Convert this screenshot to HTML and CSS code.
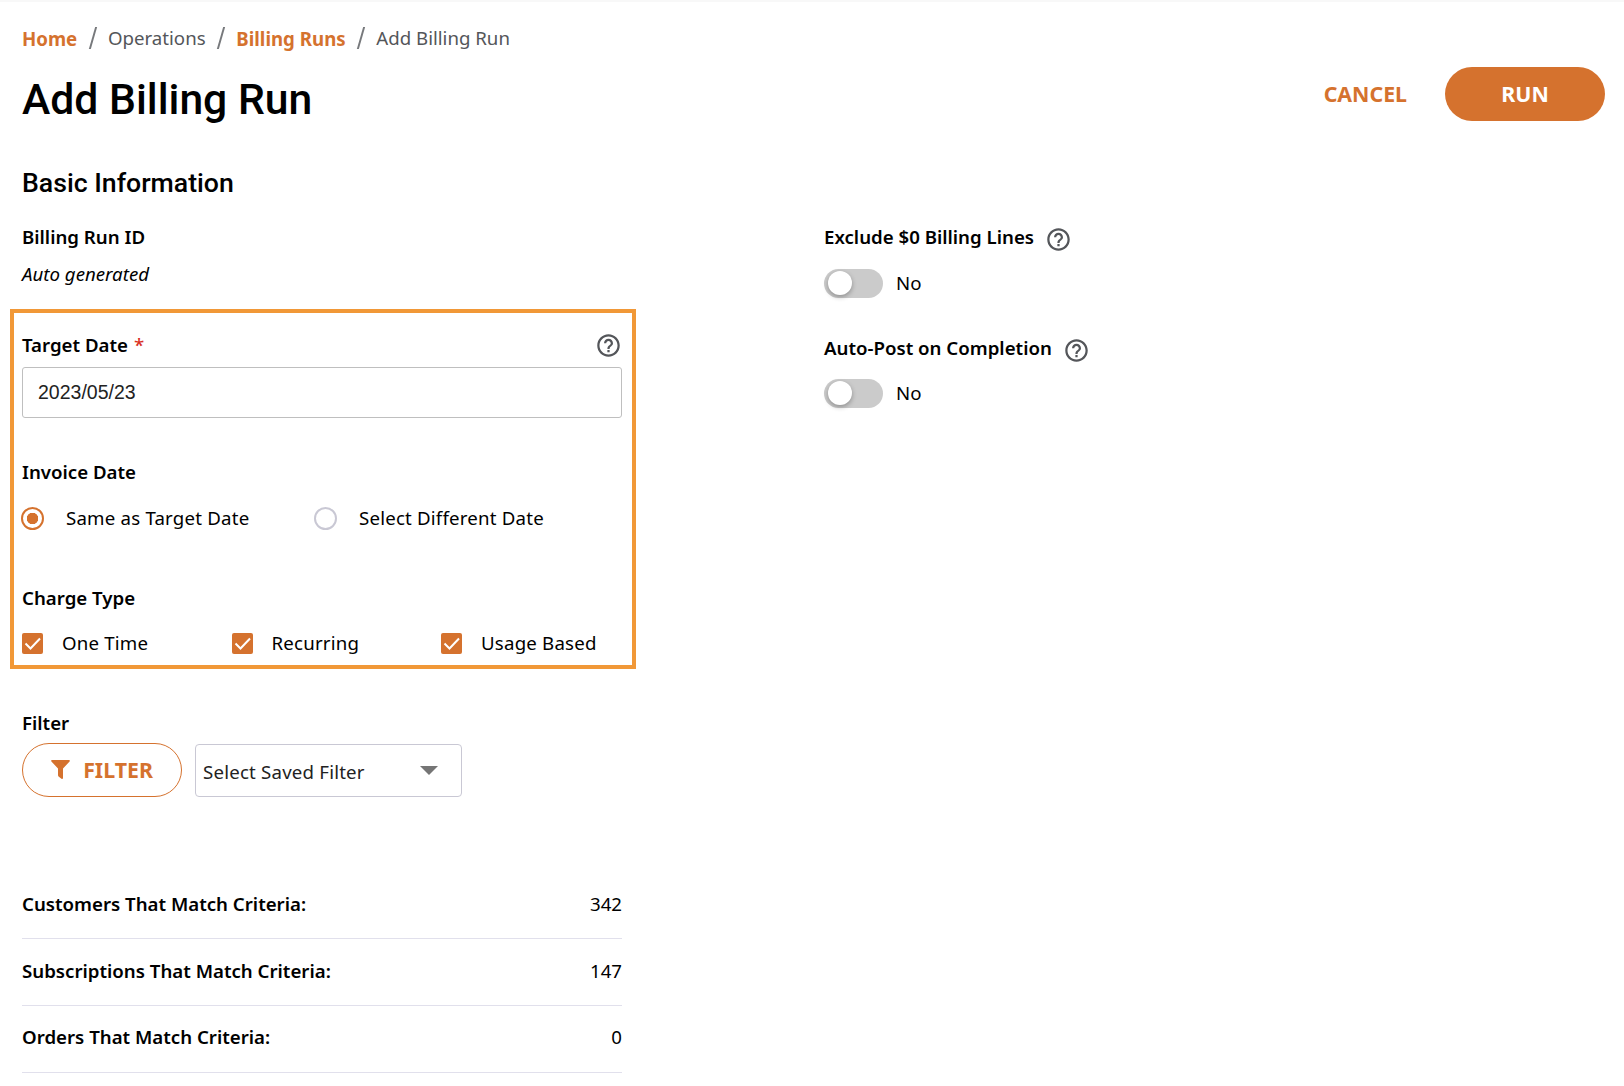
FILE: index.html
```html
<!DOCTYPE html>
<html lang="en">
<head>
    <meta charset="UTF-8">
    <meta name="viewport" content="width=device-width, initial-scale=1.0">
    <title>Add Billing Run</title>
    <link rel="stylesheet" href="styles.css">
</head>
<body>
    <!-- Help icon shared by the labels -->
    <svg class="sprite">
        <symbol id="help" viewBox="0 0 24 24">
            <path d="M11 18h2v-2h-2v2zm1-16C6.480 2 2 6.480 2 12s4.480 10 10 10 10-4.480 10-10S17.520 2 12 2zm0 18c-4.410 0-8-3.590-8-8s3.590-8 8-8 8 3.590 8 8-3.590 8-8 8zm0-14c-2.210 0-4 1.790-4 4h2c0-1.100.9-2 2-2s2 .9 2 2c0 2-3 1.750-3 5h2c0-2.250 3-2.500 3-5 0-2.210-1.790-4-4-4z"/>
        </symbol>
    </svg>

    <div class="page">
        <nav class="breadcrumb">
            <a href="#">Home</a>
            <i class="slash"></i>
            <span>Operations</span>
            <i class="slash"></i>
            <a href="#">Billing Runs</a>
            <i class="slash"></i>
            <span>Add Billing Run</span>
        </nav>

        <div class="header">
            <h1>Add Billing Run</h1>
            <div class="actions">
                <button class="btn-text">CANCEL</button>
                <button class="btn-primary">RUN</button>
            </div>
        </div>

        <h2>Basic Information</h2>

        <div class="columns">
            <div class="left">
                <div class="label">Billing Run ID</div>
                <div class="generated">Auto generated</div>

                <div class="highlight">
                    <div class="label label-row">
                        <span>Target Date <b class="required">*</b></span>
                        <svg class="help"><use href="#help"/></svg>
                    </div>
                    <input type="text" class="date" value="2023/05/23">

                    <div class="label invoice">Invoice Date</div>
                    <div class="radios">
                        <label><input type="radio" name="invoice" checked>Same as Target Date</label>
                        <label><input type="radio" name="invoice">Select Different Date</label>
                    </div>

                    <div class="label charge">Charge Type</div>
                    <div class="checks">
                        <label><svg class="check" viewBox="0 0 21 21"><path d="M3.500 10.500l5 5L18 5.500"/></svg>One Time</label>
                        <label><svg class="check" viewBox="0 0 21 21"><path d="M3.500 10.500l5 5L18 5.500"/></svg>Recurring</label>
                        <label><svg class="check" viewBox="0 0 21 21"><path d="M3.500 10.500l5 5L18 5.500"/></svg>Usage Based</label>
                    </div>
                </div>

                <div class="label filter-label">Filter</div>
                <div class="filters">
                    <button class="btn-outline">
                        <svg class="funnel" viewBox="0 0 19 19"><path d="M1 0h17c.8 0 1.200.9.600 1.500L12 8.500v9.500c0 .8-.8 1.200-1.500.7l-2.700-2c-.5-.4-.8-.8-.8-1.400V8.500L.4 1.500C-.2.900.2 0 1 0z"/></svg>
                        <span>FILTER</span>
                    </button>
                    <div class="select">
                        <span>Select Saved Filter</span>
                        <i class="caret"></i>
                    </div>
                </div>

                <div class="totals">
                    <div class="total"><strong>Customers That Match Criteria:</strong><span>342</span></div>
                    <div class="total"><strong>Subscriptions That Match Criteria:</strong><span>147</span></div>
                    <div class="total"><strong>Orders That Match Criteria:</strong><span>0</span></div>
                </div>
            </div>

            <div class="right">
                <div class="label">Exclude $0 Billing Lines<svg class="help"><use href="#help"/></svg></div>
                <div class="switch-row"><i class="switch"></i><span>No</span></div>
                <div class="label">Auto-Post on Completion<svg class="help"><use href="#help"/></svg></div>
                <div class="switch-row"><i class="switch"></i><span>No</span></div>
            </div>
        </div>
    </div>
</body>
</html>
```
FILE: styles.css
```css
* {
    box-sizing: border-box;
}
body {
    margin: 0;
    font-family: "Noto Sans", sans-serif;
    font-size: 18.67px;
    line-height: 24px;
    color: #000;
    background-color: #fff;
}
h1, h2 {
    margin: 0;
    font-family: Roboto, sans-serif;
    font-weight: 500;
}
button, input {
    font-family: inherit;
    margin: 0;
}
.sprite {
    display: none;
}
.page {
    height: 1086px;
    padding: 24px 19px 0 22px;
    border-top: 2px solid #f8f8f8;
    overflow: hidden;
}
.breadcrumb {
    display: flex;
    align-items: center;
    height: 24px;
    color: #54565a;
}
.breadcrumb a {
    color: #d5722e;
    font-weight: 700;
    text-decoration: none;
    padding-top: 1px;
}
.slash {
    width: 1.5px;
    height: 22px;
    margin: 0 14.6px;
    background-color: #77797c;
    transform: skewX(-16deg);
}
.header {
    display: flex;
    justify-content: space-between;
    height: 117px;
    padding-top: 17px;
}
h1 {
    font-size: 42.67px;
    line-height: 64px;
}
.actions {
    display: flex;
    gap: 38px;
    height: 54px;
}
.btn-text, .btn-primary, .btn-outline {
    border: none;
    background: none;
    padding: 0 0 2px;
    font-size: 21.33px;
    font-weight: 700;
    color: #d5722e;
    cursor: pointer;
}
.btn-primary {
    width: 160px;
    border-radius: 27px;
    color: #fff;
    background-color: #d5722e;
}
h2 {
    font-size: 26.67px;
    line-height: 32px;
    margin-bottom: 26px;
}
.columns {
    display: flex;
}
.left {
    width: 600px;
    margin-right: 202px;
}
.label {
    display: flex;
    height: 24px;
    font-weight: 600;
}
.label-row {
    justify-content: space-between;
}
.required {
    margin-left: 1px;
    color: #d93025;
    font-weight: 500;
}
.help {
    width: 27px;
    height: 27px;
    fill: #54565a;
}
.label-row .help {
    margin-top: -1px;
}
.generated {
    margin-top: 13px;
    font-style: italic;
}
/* box around the date and charge type fields */
.highlight {
    width: 626px;
    height: 360px;
    margin: 23px 0 0 -12px;
    padding: 20px 10px 0 8px;
    border: 4px solid #f19837;
}
.date {
    display: block;
    width: 600px;
    height: 51px;
    margin-top: 10px;
    padding: 0 15px;
    border: 1px solid #bfbfbf;
    border-radius: 3px;
    font-family: "Liberation Sans", Arial, sans-serif;
    font-size: 19.5px;
    color: #222;
}
.invoice {
    margin-top: 42px;
}
.radios, .checks, .select {
    letter-spacing: 0.2px;
}
.radios {
    display: flex;
    margin-top: 22px;
}
.radios label {
    display: flex;
    align-items: center;
    width: 293px;
    height: 24px;
}
.radios input {
    appearance: none;
    width: 23px;
    height: 23px;
    margin: 0 22px 0 -1px;
    border: 2px solid #c9c8d4;
    border-radius: 50%;
}
.radios input:checked {
    border-color: #d5722e;
    background: radial-gradient(circle, #d5722e 5.5px, #fff 6px);
}
.charge {
    margin-top: 56px;
}
.checks {
    display: flex;
    margin-top: 21px;
}
.checks label {
    display: flex;
    flex-shrink: 0;
    align-items: center;
    width: 209.5px;
    height: 24px;
}
.checks label:last-child {
    width: auto;
}
.check {
    width: 21px;
    height: 21px;
    margin-right: 19px;
    border-radius: 2px;
    background-color: #d5722e;
    fill: none;
    stroke: #fff;
    stroke-width: 2;
}
.filter-label {
    margin-top: 42px;
}
.filters {
    display: flex;
    align-items: flex-end;
    gap: 13px;
    margin-top: 8px;
}
.btn-outline {
    display: flex;
    align-items: center;
    justify-content: center;
    gap: 13px;
    width: 160px;
    height: 54px;
    border: 1px solid #d5722e;
    border-radius: 27px;
}
.funnel {
    width: 19px;
    height: 19px;
    fill: #d5722e;
}
.select {
    display: flex;
    align-items: center;
    justify-content: space-between;
    width: 267px;
    height: 53px;
    padding: 2px 23px 0 7px;
    border: 1px solid #c9c8d4;
    border-radius: 4px;
    color: #222;
}
.caret {
    margin-bottom: 2px;
    border: 9.5px solid transparent;
    border-top-color: #757575;
    border-bottom: none;
}
.totals {
    margin-top: 75px;
}
.total {
    display: flex;
    justify-content: space-between;
    height: 67px;
    padding-top: 20px;
    border-bottom: 1px solid #e1e0ec;
}
.total:last-child {
    padding-top: 19px;
}
.total strong {
    font-weight: 600;
}
.right .help {
    margin: 1px 0 0 11px;
}
.switch-row {
    display: flex;
    align-items: center;
    margin: 20px 0 38px;
    height: 29px;
}
.switch-row span {
    padding-bottom: 1px;
}
.switch-row:last-child {
    margin-top: 19px;
}
.switch {
    width: 59px;
    height: 29px;
    margin-right: 13px;
    padding: 2px 4px;
    border-radius: 15px;
    background-color: #cbcbcb;
}
.switch::before {
    content: "";
    display: block;
    width: 24px;
    height: 24px;
    border-radius: 50%;
    background-color: #fff;
    box-shadow: 0 2px 5px rgba(0, 0, 0, 0.3);
}
```
